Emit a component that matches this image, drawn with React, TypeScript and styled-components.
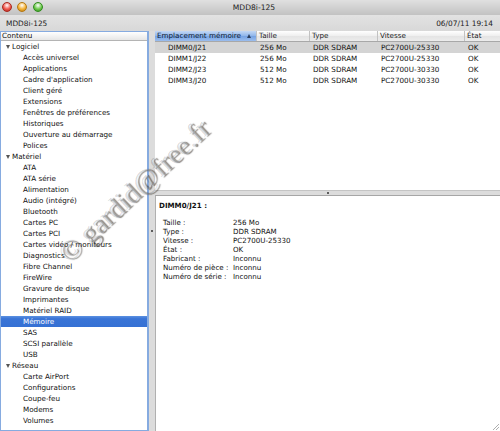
import { Fragment } from "react";
import styled, { createGlobalStyle } from "styled-components";

const GlobalStyle = createGlobalStyle`
  html, body {
    margin: 0;
    padding: 0;
    background: #ffffff;
  }
  body {
    font-family: "DejaVu Sans", "Noto Sans", sans-serif;
    color: #111;
  }
`;

const Window = styled.div`
  position: relative;
  width: 500px;
  height: 431px;
  display: flex;
  flex-direction: column;
  overflow: hidden;
  background: #dedede;
`;

const TitleBar = styled.div`
  height: 15px;
  display: grid;
  grid-template-columns: 1fr auto 1fr;
  align-items: center;
  background: linear-gradient(#e0e0e0, #c2c2c2);
`;

const Lights = styled.div`
  display: flex;
  gap: 5.5px;
  padding-left: 1.5px;
  padding-bottom: 2px;
`;

const Light = styled.span<{ $color: string; $edge: string }>`
  width: 10px;
  height: 10px;
  border-radius: 50%;
  box-sizing: border-box;
  border: 1px solid ${(p) => p.$edge};
  background: radial-gradient(
    circle at 50% 30%,
    #ffffff 0,
    ${(p) => p.$color} 55%,
    ${(p) => p.$edge} 100%
  );
`;

const Title = styled.div`
  font-size: 7.6px;
  color: #222;
  padding-left: 8px;
  padding-bottom: 1px;
`;

const InfoBar = styled.div`
  height: 16px;
  display: flex;
  align-items: center;
  justify-content: space-between;
  padding: 0 7px 0 6px;
  font-size: 7.4px;
  color: #222;
  background: linear-gradient(#e2e2e2, #d8d8d8);
`;

const Main = styled.div`
  flex: 1;
  min-height: 0;
  display: flex;
`;

const SourcePane = styled.div`
  box-sizing: border-box;
  width: 149px;
  display: flex;
  flex-direction: column;
  background: #ffffff;
  border: 1px solid #86abe0;
  border-right-width: 2px;
`;

const PaneHeader = styled.div`
  box-sizing: border-box;
  height: 9px;
  line-height: 8px;
  padding-left: 1px;
  font-size: 7.2px;
  background: linear-gradient(#ffffff, #e6e6e6);
  border-bottom: 1px solid #b4b4b4;
`;

const TreeRow = styled.div<{ $level: number; $selected?: boolean }>`
  height: 11px;
  line-height: 11px;
  display: flex;
  align-items: center;
  padding-left: ${(p) => (p.$level === 0 ? 5 : 22)}px;
  font-size: 7.2px;
  white-space: nowrap;
  color: ${(p) => (p.$selected ? "#ffffff" : "#111")};
  background: ${(p) =>
    p.$selected ? "linear-gradient(#5b91e2, #3a74d6 25%, #3570d4)" : "transparent"};
`;

const Disclosure = styled.span`
  width: 0;
  height: 0;
  margin-right: 2px;
  border-left: 2.5px solid transparent;
  border-right: 2.5px solid transparent;
  border-top: 4px solid #555;
`;

const VSplitter = styled.div`
  width: 6px;
  display: flex;
  align-items: center;
  justify-content: center;
  background: #dcdcdc;
`;

const Dimple = styled.span`
  width: 2px;
  height: 2px;
  border-radius: 50%;
  background: #333;
`;

const RightPane = styled.div`
  flex: 1;
  min-width: 0;
  display: flex;
  flex-direction: column;
`;

const TablePane = styled.div`
  height: 159px;
  background: #ffffff;
`;

const COLUMNS = "102px 53px 68px 87px 1fr";

const HeaderRow = styled.div`
  box-sizing: border-box;
  height: 11px;
  display: grid;
  grid-template-columns: ${COLUMNS};
  border-bottom: 1px solid #a8a8a8;
  background: linear-gradient(#ffffff, #eeeeee 50%, #e4e4e4 51%, #ececec);
`;

const HeaderCell = styled.div<{ $active?: boolean }>`
  display: flex;
  align-items: center;
  justify-content: space-between;
  padding: 0 5px 0 2px;
  font-size: 7.2px;
  line-height: 10px;
  color: ${(p) => (p.$active ? "#0c1a33" : "#222")};
  border-right: 1px solid #c2c2c2;
  background: ${(p) =>
    p.$active
      ? "linear-gradient(#c3d8f5, #8fb5ea 50%, #75a2e3 51%, #9bbdee)"
      : "transparent"};
  &:last-child {
    border-right: none;
  }
`;

const SortArrow = styled.span`
  width: 0;
  height: 0;
  border-left: 2.5px solid transparent;
  border-right: 2.5px solid transparent;
  border-bottom: 4px solid #2a3d5c;
`;

const Row = styled.div<{ $selected?: boolean }>`
  height: 11px;
  display: grid;
  grid-template-columns: ${COLUMNS};
  background: ${(p) => (p.$selected ? "#d4d4d4" : "transparent")};
`;

const Cell = styled.div<{ $indent?: number }>`
  padding-left: ${(p) => p.$indent ?? 3}px;
  font-size: 7.2px;
  line-height: 12px;
  white-space: nowrap;
`;

const HSplitter = styled.div`
  box-sizing: border-box;
  height: 6px;
  display: flex;
  align-items: center;
  justify-content: center;
  background: #dcdcdc;
  border-top: 1px solid #c4c4c4;
  border-bottom: 1px solid #a6a6a6;
`;

const DetailPane = styled.div`
  flex: 1;
  background: #ffffff;
  border-left: 1px solid #b0b0b0;
  padding: 5px 0 0 3px;
  font-size: 7.1px;
`;

const DetailTitle = styled.div`
  font-weight: bold;
  line-height: 9px;
  margin-bottom: 8px;
`;

const DetailGrid = styled.div`
  display: grid;
  grid-template-columns: 70px 1fr;
  padding-left: 4px;
  line-height: 9px;
  white-space: nowrap;
`;

const Grip = styled.svg`
  position: absolute;
  right: 1px;
  bottom: 1px;
`;

const Watermark = styled.div`
  position: absolute;
  left: 35px;
  top: 175px;
  width: 200px;
  line-height: 32px;
  text-align: center;
  white-space: nowrap;
  font-family: "Liberation Serif", "DejaVu Serif", serif;
  font-size: 28px;
  color: rgba(255, 255, 255, 0.3);
  text-shadow: 1px 1px 1px rgba(0, 0, 0, 0.5), -1px -1px 0 rgba(0, 0, 0, 0.15);
  transform: rotate(-43deg);
  transform-origin: center;
  pointer-events: none;
`;

const tree: { name: string; items: string[] }[] = [
  {
    name: "Logiciel",
    items: [
      "Accès universel",
      "Applications",
      "Cadre d'application",
      "Client géré",
      "Extensions",
      "Fenêtres de préférences",
      "Historiques",
      "Ouverture au démarrage",
      "Polices",
    ],
  },
  {
    name: "Matériel",
    items: [
      "ATA",
      "ATA série",
      "Alimentation",
      "Audio (intégré)",
      "Bluetooth",
      "Cartes PC",
      "Cartes PCI",
      "Cartes vidéo / moniteurs",
      "Diagnostics",
      "Fibre Channel",
      "FireWire",
      "Gravure de disque",
      "Imprimantes",
      "Matériel RAID",
      "Mémoire",
      "SAS",
      "SCSI parallèle",
      "USB",
    ],
  },
  {
    name: "Réseau",
    items: ["Carte AirPort", "Configurations", "Coupe-feu", "Modems", "Volumes"],
  },
];

const headers = ["Emplacement mémoire", "Taille", "Type", "Vitesse", "État"];

const rows = [
  ["DIMM0/J21", "256 Mo", "DDR SDRAM", "PC2700U-25330", "OK"],
  ["DIMM1/J22", "256 Mo", "DDR SDRAM", "PC2700U-25330", "OK"],
  ["DIMM2/J23", "512 Mo", "DDR SDRAM", "PC2700U-30330", "OK"],
  ["DIMM3/J20", "512 Mo", "DDR SDRAM", "PC2700U-30330", "OK"],
];

const details = [
  ["Taille :", "256 Mo"],
  ["Type :", "DDR SDRAM"],
  ["Vitesse :", "PC2700U-25330"],
  ["État :", "OK"],
  ["Fabricant :", "Inconnu"],
  ["Numéro de pièce :", "Inconnu"],
  ["Numéro de série :", "Inconnu"],
];

const App = () => {
  return (
    <>
      <GlobalStyle />
      <Window>
        <TitleBar>
          <Lights>
            <Light $color="#f0554a" $edge="#a8281e" />
            <Light $color="#f5b235" $edge="#b57812" />
            <Light $color="#6cc94a" $edge="#2f8a1d" />
          </Lights>
          <Title>MDD8i-125</Title>
          <div />
        </TitleBar>
        <InfoBar>
          <span>MDD8i-125</span>
          <span>06/07/11 19:14</span>
        </InfoBar>

        <Main>
          <SourcePane>
            <PaneHeader>Contenu</PaneHeader>
            {tree.map((group) => (
              <div key={group.name}>
                <TreeRow $level={0}>
                  <Disclosure />
                  {group.name}
                </TreeRow>
                {group.items.map((item) => (
                  <TreeRow key={item} $level={1} $selected={item === "Mémoire"}>
                    {item}
                  </TreeRow>
                ))}
              </div>
            ))}
          </SourcePane>

          <VSplitter>
            <Dimple />
          </VSplitter>

          <RightPane>
            <TablePane>
              <HeaderRow>
                {headers.map((h, i) => (
                  <HeaderCell key={h} $active={i === 0}>
                    {h}
                    {i === 0 && <SortArrow />}
                  </HeaderCell>
                ))}
              </HeaderRow>
              {rows.map((r, i) => (
                <Row key={r[0]} $selected={i === 0}>
                  {r.map((c, j) => (
                    <Cell key={j} $indent={j === 0 ? 13 : 3}>
                      {c}
                    </Cell>
                  ))}
                </Row>
              ))}
            </TablePane>

            <HSplitter>
              <Dimple />
            </HSplitter>

            <DetailPane>
              <DetailTitle>DIMM0/J21 :</DetailTitle>
              <DetailGrid>
                {details.map(([label, value]) => (
                  <Fragment key={label}>
                    <span>{label}</span>
                    <span>{value}</span>
                  </Fragment>
                ))}
              </DetailGrid>
            </DetailPane>
          </RightPane>
        </Main>

        <Grip width="7" height="7" viewBox="0 0 7 7">
          <path d="M7 1L1 7M7 4L4 7" stroke="#9a9a9a" strokeWidth="0.8" />
        </Grip>

        <Watermark>© gardid@free.fr</Watermark>
      </Window>
    </>
  );
};

export default App;
